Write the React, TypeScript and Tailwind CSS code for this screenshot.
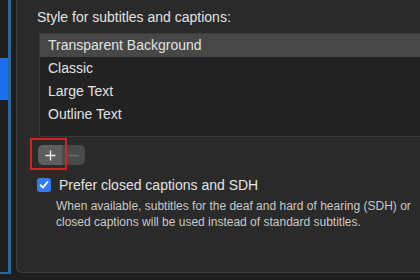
import React from 'react';

const styles = ['Transparent Background', 'Classic', 'Large Text', 'Outline Text'];

export default function App() {
  return (
    <div className="w-[420px] h-[280px] bg-[#1e1e1e] overflow-hidden flex items-start font-['Liberation_Sans',sans-serif] text-[#e2e2e2]">
      {/* sidebar edge */}
      <div className="w-[11px] shrink-0 h-[274px] border-r-[3px] border-b-[2px] border-[#2e6798] bg-[#1f1f1f]">
        <div className="mt-[58px] h-[42px] bg-[#1b6fef]" />
      </div>

      {/* settings panel */}
      <div className="ml-[5px] flex-1 min-w-0 h-[273px] bg-[#2a2a2a] border-l border-b border-[#3d3d3d] rounded-bl-[6px] pl-[20px] pt-[9px] overflow-hidden">
        <div className="text-[14px] leading-[16px] whitespace-nowrap">Style for subtitles and captions:</div>

        <div className="mt-[8px] ml-[2px] w-[400px] h-[104px] bg-[#222222] border border-[#393939]">
          {styles.map((s, i) => (
            <div
              key={s}
              className={`h-[23px] pl-[8px] flex items-center text-[14px] whitespace-nowrap ${i === 0 ? 'bg-[#474747]' : ''}`}
            >
              {s}
            </div>
          ))}
        </div>

        <div className="relative mt-[8px] ml-[1px] w-[47px] h-[20px] flex rounded-[5px] overflow-visible">
          <div className="w-[24px] h-full rounded-l-[5px] bg-[#5e5e5e] flex items-center justify-center">
            <svg width="11" height="11" viewBox="0 0 11 11">
              <path d="M5.5 0.5v10M0.5 5.5h10" stroke="#ececec" strokeWidth="1.4" />
            </svg>
          </div>
          <div className="w-[23px] h-full rounded-r-[5px] bg-[#4a4a4a] flex items-center justify-center">
            <svg width="11" height="11" viewBox="0 0 11 11">
              <path d="M0.5 5.5h10" stroke="#6e6e6e" strokeWidth="1.4" />
            </svg>
          </div>
          {/* highlight annotation */}
          <div className="absolute left-[-8px] top-[-7px] w-[37px] h-[32px] border-[2.5px] border-[#cf2525]" />
        </div>

        <div className="mt-[12px] flex items-center gap-[8px]">
          <div className="w-[14px] h-[14px] rounded-[3px] bg-[#2f7df6] flex items-center justify-center">
            <svg width="10" height="10" viewBox="0 0 10 10">
              <path d="M1.6 5.2l2.3 2.4 4.6-5.6" fill="none" stroke="#ffffff" strokeWidth="1.8" strokeLinecap="round" strokeLinejoin="round" />
            </svg>
          </div>
          <div className="text-[14px] leading-[16px] whitespace-nowrap">Prefer closed captions and SDH</div>
        </div>

        <div className="mt-[5px] ml-[19px] text-[12px] leading-[16px] text-[#c9c9c9] whitespace-nowrap">
          <div>When available, subtitles for the deaf and hard of hearing (SDH) or</div>
          <div>closed captions will be used instead of standard subtitles.</div>
        </div>
      </div>
    </div>
  );
}
